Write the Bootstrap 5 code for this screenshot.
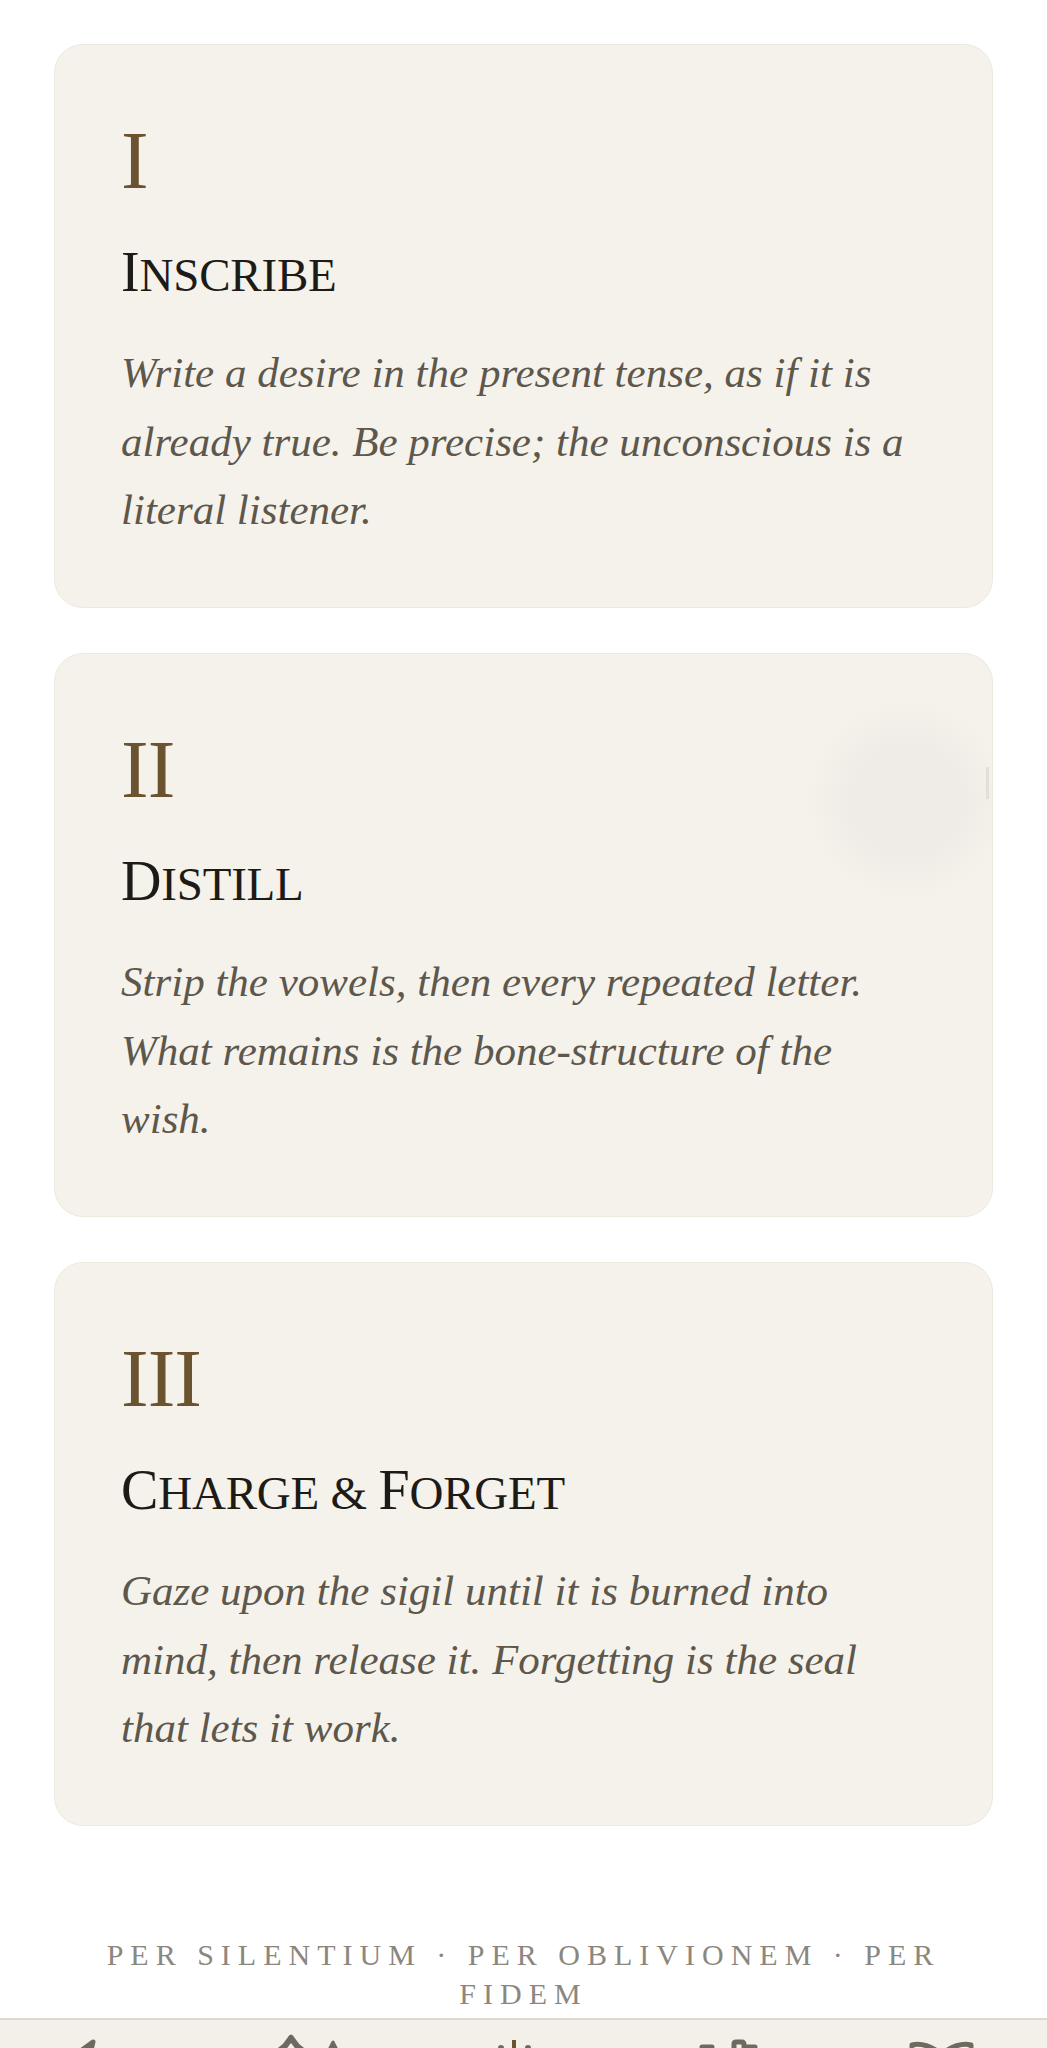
<!DOCTYPE html>
<html lang="en">
<head>
<meta charset="utf-8">
<title>Sigil</title>
<link href="https://cdn.jsdelivr.net/npm/bootstrap@5.3.0/dist/css/bootstrap.min.css" rel="stylesheet">
<style>
html,body{height:100%;overflow:hidden;background:#fff}
.page{height:100%}
.stack{padding:44px 54px 0;gap:45px}
.rite{background:#f5f2eb;border:1px solid #ece9e0;border-radius:29px;padding:70px 66px 0;height:564px;overflow:hidden}
.numeral{font-family:"Liberation Serif",serif;font-size:83px;line-height:90px;color:#6b5330;letter-spacing:-1px}
.rite-title{font-family:"Liberation Serif",serif;font-size:47px;line-height:56px;font-weight:400;text-transform:uppercase;color:#1d1b18;margin:39px 0 36px;letter-spacing:-.2px}
.rite-title span{font-size:56px}
.rite-text{font-family:"Liberation Serif",serif;font-style:italic;font-size:43px;line-height:68.6px;color:#5d574c;margin:0}
.blob{width:200px;height:200px;right:-15px;top:46px;background:radial-gradient(circle closest-side,#efece7 55%,#f5f2eb 100%)}
.sliver{width:3px;height:32px;right:3px;top:113px;background:#e2dfd5}
.motto{font-family:"Liberation Serif",serif;font-size:30px;line-height:39px;letter-spacing:7px;text-transform:uppercase;color:#8b877e;padding:0 100px 5px}
.tabbar{height:30px;background:#f3f0e9;border-top:2px solid #dcd8ce;overflow:hidden}
.tabbar svg{left:0;top:0}
</style>
</head>
<body>
<div class="page d-flex flex-column">
  <main class="flex-grow-1 d-flex flex-column">
    <div class="stack d-flex flex-column">
      <section class="rite">
        <div class="numeral">I</div>
        <h3 class="rite-title"><span>I</span>nscribe</h3>
        <p class="rite-text">Write a desire in the present tense, as if it is already true. Be precise; the unconscious is a literal listener.</p>
      </section>
      <section class="rite position-relative">
        <div class="blob position-absolute rounded-circle"></div>
        <div class="sliver position-absolute"></div>
        <div class="numeral position-relative">II</div>
        <h3 class="rite-title position-relative"><span>D</span>istill</h3>
        <p class="rite-text position-relative">Strip the vowels, then every repeated letter. What remains is the bone-structure of the wish.</p>
      </section>
      <section class="rite">
        <div class="numeral">III</div>
        <h3 class="rite-title"><span>C</span>harge &amp; <span>F</span>orget</h3>
        <p class="rite-text">Gaze upon the sigil until it is burned into mind, then release it. Forgetting is the seal that lets it work.</p>
      </section>
    </div>
    <footer class="motto text-center mt-auto">Per Silentium · Per Oblivionem · Per Fidem</footer>
  </main>
  <nav class="tabbar flex-shrink-0 position-relative">
    <svg class="position-absolute" width="1047" height="30" viewBox="0 0 1047 30" fill="none" stroke="#6f6a60" stroke-width="5" stroke-linecap="round" stroke-linejoin="round">
      <path fill="#6f6a60" d="M93 22 L82 30 H91 Z"/>
      <path stroke-width="6" d="M291 18 L285 26 L280 30 M291 18 L297 26 L302 30"/>
      <path fill="#6f6a60" stroke-width="3" d="M333 22 L328 32 H338 Z"/>
      <path stroke="#6b5330" stroke-width="4" stroke-linecap="butt" d="M514 20 V32"/>
      <path stroke-width="6" d="M501 28 V32 M528 28 V32"/>
      <path d="M702 27 H712 M734 32 V24 Q734 22 736 22 H742 Q744 22 744 25 V27 H755"/>
      <path d="M912 34 V25 Q925 22 940 33 M971 34 V25 Q958 22 943 33"/>
    </svg>
  </nav>
</div>
<script src="https://cdn.jsdelivr.net/npm/bootstrap@5.3.0/dist/js/bootstrap.bundle.min.js"></script>
</body>
</html>
